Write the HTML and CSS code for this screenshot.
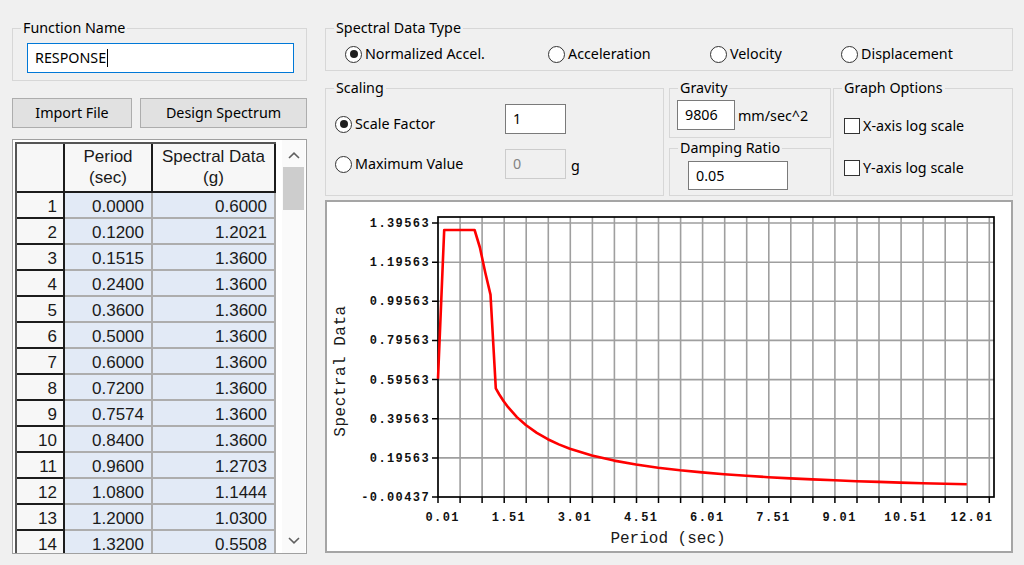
FILE: index.html
```html
<!DOCTYPE html>
<html>
<head>
<meta charset="utf-8">
<link rel="stylesheet" href="styles.css">
</head>
<body>
<div class="app">
  <div class="left">
    <fieldset class="grp grp-fn">
      <legend>Function Name</legend>
      <div class="fn-body"><div class="tb tb-focus">RESPONSE<span class="caret"></span></div></div>
    </fieldset>
    <div class="btns">
      <button class="btn btn-import">Import File</button>
      <button class="btn btn-design">Design Spectrum</button>
    </div>
    <div class="tablewrap">
      <div class="grid">
        <div class="corner"></div>
        <div class="hdr">Period<br>(sec)</div>
        <div class="hdr">Spectral Data<br>(g)</div>
        <div class="rh">1</div><div class="cell">0.0000</div><div class="cell">0.6000</div>
        <div class="rh">2</div><div class="cell">0.1200</div><div class="cell">1.2021</div>
        <div class="rh">3</div><div class="cell">0.1515</div><div class="cell">1.3600</div>
        <div class="rh">4</div><div class="cell">0.2400</div><div class="cell">1.3600</div>
        <div class="rh">5</div><div class="cell">0.3600</div><div class="cell">1.3600</div>
        <div class="rh">6</div><div class="cell">0.5000</div><div class="cell">1.3600</div>
        <div class="rh">7</div><div class="cell">0.6000</div><div class="cell">1.3600</div>
        <div class="rh">8</div><div class="cell">0.7200</div><div class="cell">1.3600</div>
        <div class="rh">9</div><div class="cell">0.7574</div><div class="cell">1.3600</div>
        <div class="rh">10</div><div class="cell">0.8400</div><div class="cell">1.3600</div>
        <div class="rh">11</div><div class="cell">0.9600</div><div class="cell">1.2703</div>
        <div class="rh">12</div><div class="cell">1.0800</div><div class="cell">1.1444</div>
        <div class="rh">13</div><div class="cell">1.2000</div><div class="cell">1.0300</div>
        <div class="rh">14</div><div class="cell">1.3200</div><div class="cell">0.5508</div>
      </div>
      <div class="vscroll">
        <div class="sb-btn sb-up"><svg width="12" height="7" viewBox="0 0 12 7"><path d="M1 6L6 1.2L11 6"/></svg></div>
        <div class="sb-thumb"></div>
        <div class="sb-btn sb-down"><svg width="12" height="7" viewBox="0 0 12 7"><path d="M1 1L6 5.8L11 1"/></svg></div>
      </div>
    </div>
  </div>

  <div class="right">
    <fieldset class="grp grp-type">
      <legend>Spectral Data Type</legend>
      <div class="type-row">
        <label class="opt"><span class="radio on"></span>Normalized Accel.</label>
        <label class="opt"><span class="radio"></span>Acceleration</label>
        <label class="opt"><span class="radio"></span>Velocity</label>
        <label class="opt"><span class="radio"></span>Displacement</label>
      </div>
    </fieldset>

    <div class="mid">
      <fieldset class="grp grp-scale">
        <legend>Scaling</legend>
        <div class="scale-body">
          <label class="opt opt-sf"><span class="radio on"></span>Scale Factor</label>
          <div class="tb tb-num">1</div>
          <span></span>
          <label class="opt"><span class="radio"></span>Maximum Value</label>
          <div class="tb tb-num tb-dis">0</div>
          <span class="unit">g</span>
        </div>
      </fieldset>
      <div class="gcol">
        <fieldset class="grp grp-grav">
          <legend>Gravity</legend>
          <div class="grav-body"><div class="tb tb-grav">9806</div><span class="grav-unit">mm/sec^2</span></div>
        </fieldset>
        <fieldset class="grp grp-damp">
          <legend>Damping Ratio</legend>
          <div class="damp-body"><div class="tb tb-damp">0.05</div></div>
        </fieldset>
      </div>
      <fieldset class="grp grp-opt">
        <legend>Graph Options</legend>
        <div class="opt-body">
          <label class="opt"><span class="chk"></span>X-axis log scale</label>
          <label class="opt"><span class="chk"></span>Y-axis log scale</label>
        </div>
      </fieldset>
    </div>

    <div class="chart">
      <svg class="plot" width="684" height="349" viewBox="327 202 684 349">
        <path class="gridv" d="M460.1 217V497M482.1 217V497M504.2 217V497M526.2 217V497M548.3 217V497M570.3 217V497M592.4 217V497M614.4 217V497M636.5 217V497M658.5 217V497M680.6 217V497M702.6 217V497M724.7 217V497M746.7 217V497M768.8 217V497M790.8 217V497M812.9 217V497M834.9 217V497M857 217V497M879 217V497M901.1 217V497M923.1 217V497M945.2 217V497M967.2 217V497M989.3 217V497"/>
        <path class="gridv" d="M438 223H994M438 262.2H994M438 301.3H994M438 340.4H994M438 379.6H994M438 418.7H994M438 457.9H994"/>
        <path class="ticks" d="M432 223H438M432 262.2H438M432 301.3H438M432 340.4H438M432 379.6H438M432 418.7H438M432 457.9H438M432 497H438M438 497V503M460.1 497V503M482.1 497V503M504.2 497V503M526.2 497V503M548.3 497V503M570.3 497V503M592.4 497V503M614.4 497V503M636.5 497V503M658.5 497V503M680.6 497V503M702.6 497V503M724.7 497V503M746.7 497V503M768.8 497V503M790.8 497V503M812.9 497V503M834.9 497V503M857 497V503M879 497V503M901.1 497V503M923.1 497V503M945.2 497V503M967.2 497V503M989.3 497V503"/>
        <rect class="frame" x="438" y="217" width="556" height="280"/>
        <polyline class="curve" points="438,378.7 442.9,260.9 444.2,230 474.6,230 479.9,247.5 485.2,272.2 490.5,294.6 495.8,388.4 499.3,394.5 503.7,401.3 508.1,407.2 516.9,417.1 525.8,425 536.8,432.9 547.8,439.2 558.8,444.4 569.9,448.7 591.9,455.5 614,460.6 636,464.5 658.1,467.7 680.1,470.3 702.2,472.4 724.2,474.3 746.3,475.8 768.3,477.2 790.4,478.4 812.4,479.4 834.5,480.3 856.5,481.2 878.6,481.9 900.6,482.6 922.7,483.2 944.7,483.8 966.8,484.3"/>
        <g class="ylab">
          <text x="430" y="227">1.39563</text>
          <text x="430" y="266.2">1.19563</text>
          <text x="430" y="305.3">0.99563</text>
          <text x="430" y="344.4">0.79563</text>
          <text x="430" y="383.6">0.59563</text>
          <text x="430" y="422.7">0.39563</text>
          <text x="430" y="461.9">0.19563</text>
          <text x="430" y="501">-0.00437</text>
        </g>
        <g class="xlab">
          <text x="442.7" y="520.5">0.01</text>
          <text x="508.9" y="520.5">1.51</text>
          <text x="575" y="520.5">3.01</text>
          <text x="641.2" y="520.5">4.51</text>
          <text x="707.3" y="520.5">6.01</text>
          <text x="773.5" y="520.5">7.51</text>
          <text x="839.6" y="520.5">9.01</text>
          <text x="905.8" y="520.5">10.51</text>
          <text x="971.9" y="520.5">12.01</text>
        </g>
        <text class="axtitle" x="668" y="542.5">Period (sec)</text>
        <text class="axtitle axv" transform="translate(345 371) rotate(-90)" x="0" y="0">Spectral Data</text>
      </svg>
    </div>
  </div>
</div>
</body>
</html>
```

FILE: styles.css
```css
* { box-sizing: border-box; }
html, body { margin: 0; padding: 0; }
body {
  width: 1024px;
  height: 565px;
  overflow: hidden;
  background: #f0f0f0;
  font-family: "Noto Sans", "Open Sans", sans-serif;
  font-size: 14.3px;
  line-height: 18px;
  color: #000;
}
.app {
  display: flex;
  gap: 18px;
  padding: 20px 0 0 12px;
}
.left {
  width: 295px;
  flex: none;
  display: flex;
  flex-direction: column;
}
.right {
  width: 688px;
  flex: none;
  display: flex;
  flex-direction: column;
}

/* group boxes */
.grp {
  margin: 0;
  padding: 0;
  border: 1px solid #d7d7d7;
  min-width: 0;
}
.grp legend {
  padding: 0 2px;
  margin-left: 8px;
  line-height: 16px;
  font-size: 14.3px;
}

/* text boxes */
.tb {
  display: flex;
  align-items: center;
  height: 30px;
  padding-left: 7px;
  background: #fff;
  border: 1px solid #7a7a7a;
  white-space: nowrap;
}
.tb-focus { border-color: #0078d7; }
.caret {
  display: inline-block;
  width: 1px;
  height: 18px;
  background: #000;
  margin-left: 1px;
}
.tb-dis {
  background: #f0f0f0;
  border-color: #cccccc;
  color: #838383;
}

/* function name */
.fn-body { padding: 7px 12px 7px 14px; }

/* buttons */
.btns {
  display: flex;
  gap: 8px;
  margin-top: 17px;
}
.btn {
  font: inherit;
  height: 30px;
  padding: 0 0 0 0;
  background: #e1e1e1;
  border: 1px solid #adadad;
  color: #000;
}
.btn-import { width: 120px; }
.btn-design { width: 167px; }

/* table */
.tablewrap {
  margin-top: 11px;
  height: 415px;
  border: 1px solid #a0a0a0;
  background: #fff;
  display: flex;
  overflow: hidden;
}
.grid {
  margin: 2px 0 0 2px;
  display: grid;
  grid-template-columns: 48px 88px 123px;
  grid-template-rows: 49px;
  grid-auto-rows: 26px;
  align-self: flex-start;
  border-top: 2px solid #555;
  border-left: 2px solid #555;
  font-family: "Liberation Sans", Arial, sans-serif;
  font-size: 17px;
  color: #1a1a1a;
}
.corner, .hdr {
  background: #f7f7f7;
  border-right: 2px solid #1c1c1c;
  border-bottom: 2px solid #1c1c1c;
}
.hdr {
  display: flex;
  align-items: center;
  justify-content: center;
  text-align: center;
  line-height: 21px;
  padding-bottom: 2px;
}
.rh {
  background: #f7f7f7;
  border-right: 2px solid #1c1c1c;
  border-bottom: 2px solid #1c1c1c;
  text-align: right;
  padding: 4px 6px 0 0;
  line-height: 20px;
}
.cell {
  background: #e2eaf6;
  border-right: 2px solid #adadad;
  border-bottom: 2px solid #adadad;
  text-align: right;
  padding: 4px 7px 0 0;
  line-height: 20px;
}
.vscroll {
  margin-left: auto;
  margin-right: 1px;
  width: 23px;
  display: flex;
  flex-direction: column;
  background: #fafafa;
}
.sb-btn {
  display: flex;
  align-items: center;
  justify-content: center;
}
.sb-btn path {
  fill: none;
  stroke: #606060;
  stroke-width: 1.6;
}
.sb-up { height: 27px; padding-top: 3px; }
.sb-down { height: 25px; margin-top: auto; }
.sb-thumb {
  height: 43px;
  margin: 0 1px;
  background: #cdcdcd;
}

/* options */
.opt {
  display: flex;
  align-items: center;
  white-space: nowrap;
}
.radio {
  width: 17px;
  height: 17px;
  border: 1px solid #333;
  border-radius: 50%;
  background: #fff;
  margin-right: 3px;
  flex: none;
  display: flex;
  align-items: center;
  justify-content: center;
}
.radio.on::after {
  content: "";
  width: 8px;
  height: 8px;
  border-radius: 50%;
  background: #1e1e1e;
}
.chk {
  width: 16px;
  height: 16px;
  border: 1px solid #333;
  background: #fff;
  margin-right: 3px;
  flex: none;
}

/* spectral data type */
.type-row {
  display: grid;
  grid-template-columns: 203px 162px 131px 1fr;
  padding: 9px 0 7px 19px;
  height: 34px;
}

/* middle row */
.mid {
  margin-top: 9px;
  display: flex;
  align-items: flex-start;
}
.grp-scale { width: 339px; }
.gcol {
  width: 162px;
  margin-left: 5px;
  display: flex;
  flex-direction: column;
  gap: 2px;
}
.grp-opt { width: 180px; margin-left: 2px; }

.scale-body {
  display: grid;
  grid-template-columns: 170px 61px auto;
  grid-template-rows: 30px 30px;
  row-gap: 15px;
  align-items: center;
  padding: 8px 0 16px 9px;
}
.opt-sf { margin-top: 10px; }
.unit { margin-left: 5px; margin-top: 4px; }

.grav-body {
  display: flex;
  align-items: center;
  padding: 4px 0 7px 7px;
}
.tb-grav { width: 58px; }
.grav-unit { margin-left: 3px; margin-top: 1px; }
.damp-body { padding: 5px 0 5px 18px; }
.tb-damp { width: 100px; height: 29px; }

.opt-body {
  display: flex;
  flex-direction: column;
  gap: 25px;
  padding: 21px 0 19px 10px;
}
.opt-body .opt { height: 17px; }

/* chart */
.chart {
  margin-top: 4px;
  height: 353px;
  border: 2px solid #a5a5a5;
  background: #fff;
}
.plot { display: block; }
.gridv {
  fill: none;
  stroke: #9f9f9f;
  stroke-width: 1.6;
}
.ticks {
  fill: none;
  stroke: #000;
  stroke-width: 1.5;
}
.frame {
  fill: none;
  stroke: #000;
  stroke-width: 1.7;
}
.curve {
  fill: none;
  stroke: #ff0000;
  stroke-width: 2.6;
  stroke-linejoin: round;
}
.ylab text {
  font-family: "Liberation Mono", "Courier New", monospace;
  font-weight: bold;
  font-size: 12px;
  letter-spacing: 1.4px;
  text-anchor: end;
  fill: #111;
}
.xlab text {
  font-family: "Liberation Mono", "Courier New", monospace;
  font-weight: bold;
  font-size: 12px;
  letter-spacing: 1.4px;
  text-anchor: middle;
  fill: #111;
}
.axtitle {
  font-family: "Liberation Mono", "Courier New", monospace;
  font-size: 16px;
  text-anchor: middle;
  fill: #1a1a1a;
}
.axv { letter-spacing: 0.5px; }
```
